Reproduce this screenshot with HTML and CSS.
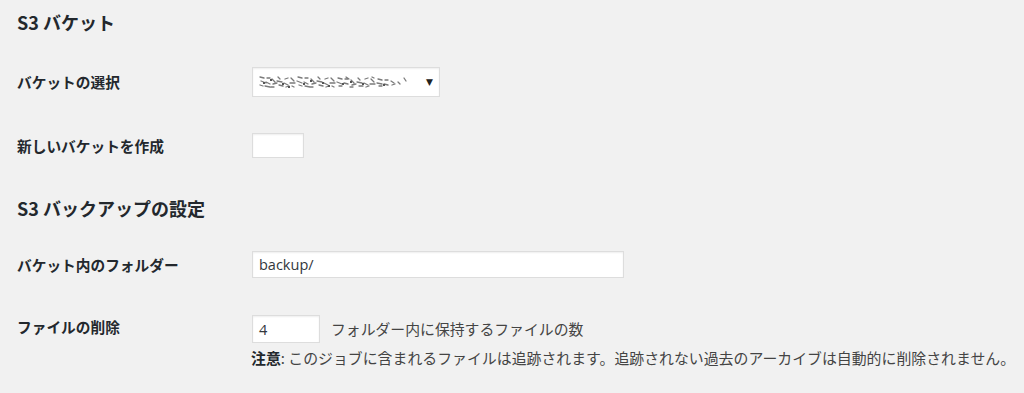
FILE: index.html
```html
<!DOCTYPE html>
<html lang="ja">
<head>
<meta charset="utf-8">
<title>S3 設定</title>
<link rel="stylesheet" href="styles.css">
</head>
<body>
<div class="wrap">
  <h3 class="section first">S3 バケット</h3>
  <div class="row r1">
    <div class="label">バケットの選択</div>
    <div class="field">
      <div class="select">
        <svg class="mosaic" width="160" height="16" viewBox="0 0 160 16" aria-hidden="true">
          <g stroke="#7a7a7a" stroke-width="1.3" fill="none" stroke-linecap="round">
            <path d="M2 3l4 1M3 7l5 2M2 11l3 1M9 4l3 0M8 8l4 2M7 12l5 1M14 5l3 3M15 10l4 -1M13 13l3 0"/>
            <path d="M20 3l2 2M19 7l5 1M21 11l4 1M27 5l3 -1M26 9l4 2M28 13l3 -1M33 4l3 3M32 9l5 0M34 12l2 1"/>
            <path d="M40 3l4 1M39 7l5 2M41 11l3 1M47 4l3 0M46 8l4 2M47 12l5 1M53 5l3 3M54 10l4 -1M52 13l3 0"/>
            <path d="M60 3l2 2M59 7l5 1M61 11l4 1M67 5l3 -1M66 9l4 2M68 13l3 -1M73 4l3 3M72 9l5 0M74 12l2 1"/>
            <path d="M80 4l4 1M79 8l5 2M81 12l3 0M87 5l3 0M86 9l4 1M88 3l3 2M93 6l3 3M94 11l4 -1M92 13l3 0"/>
            <path d="M100 4l2 2M99 8l5 1M101 12l4 0M107 5l3 -1M106 9l4 2M108 13l3 -1M113 5l3 3M112 10l5 0M114 3l2 1"/>
            <path d="M120 5l4 1M119 9l5 1M121 12l3 0M127 6l3 0M126 10l4 1M133 7l3 2M134 11l3 -1M140 8l2 2M146 4l2 3"/>
          </g>
          <g fill="#555">
            <rect x="5" y="8" width="2" height="2"/><rect x="24" y="9" width="2" height="2"/><rect x="45" y="9" width="2" height="2"/>
            <rect x="64" y="8" width="2" height="2"/><rect x="84" y="9" width="2" height="2"/><rect x="104" y="9" width="2" height="2"/>
            <rect x="125" y="10" width="2" height="2"/><rect x="30" y="12" width="2" height="2"/><rect x="70" y="11" width="2" height="2"/>
            <rect x="12" y="5" width="2" height="2"/><rect x="52" y="6" width="2" height="2"/><rect x="92" y="7" width="2" height="2"/>
          </g>
        </svg>
        <span class="arrow">▼</span>
      </div>
    </div>
  </div>
  <div class="row r2">
    <div class="label">新しいバケットを作成</div>
    <div class="field"><div class="input small"></div></div>
  </div>

  <h3 class="section second">S3 バックアップの設定</h3>
  <div class="row r3">
    <div class="label">バケット内のフォルダー</div>
    <div class="field"><div class="input wide">backup/</div></div>
  </div>
  <div class="row r4">
    <div class="label">ファイルの削除</div>
    <div class="field col">
      <div class="inline">
        <div class="input num">4</div>
        <span class="desc">フォルダー内に保持するファイルの数</span>
      </div>
      <p class="note"><strong>注意</strong>: このジョブに含まれるファイルは追跡されます。追跡されない過去のアーカイブは自動的に削除されません。</p>
    </div>
  </div>
</div>
</body>
</html>
```
FILE: styles.css
```css
html, body {
  margin: 0;
  padding: 0;
  background: #f1f1f1;
}
body {
  font-family: "Noto Sans CJK JP", "Open Sans", sans-serif;
  color: #23282d;
  font-size: 14.7px;
}
.wrap {
  padding: 0 17px;
}
.section {
  margin: 0;
  font-size: 18px;
  font-weight: 700;
  line-height: 24px;
  color: #23282d;
}
.section.first {
  padding-top: 10px;
}
.section.second {
  margin-top: 38px;
}
.row {
  display: flex;
  align-items: center;
}
.label {
  width: 235px;
  flex: none;
  font-weight: 700;
  line-height: 20px;
}
.field {
  display: flex;
  align-items: center;
}
.field.col {
  flex-direction: column;
  align-items: flex-start;
}
.r1 { margin-top: 33px; }
.r2 { margin-top: 36px; }
.r3 { margin-top: 31px; }
.r4 { margin-top: 37px; align-items: flex-start; }
.r4 .label { padding-top: 2px; }

.select {
  box-sizing: border-box;
  width: 188px;
  height: 30px;
  background: #fff;
  border: 1px solid #ddd;
  box-shadow: inset 0 1px 2px rgba(0,0,0,0.07);
  display: flex;
  align-items: center;
  padding-left: 5px;
  position: relative;
}
.mosaic {
  display: block;
}
.arrow {
  position: absolute;
  right: 6px;
  top: 7px;
  font-size: 9px;
  line-height: 14px;
  color: #222;
  font-family: "DejaVu Sans", sans-serif;
}
.input {
  box-sizing: border-box;
  background: #fff;
  border: 1px solid #ddd;
  box-shadow: inset 0 1px 2px rgba(0,0,0,0.07);
  font-family: "Open Sans", "Noto Sans CJK JP", sans-serif;
  font-size: 14.5px;
  color: #32373c;
  padding-left: 6px;
  display: flex;
  align-items: center;
}
.input.small {
  width: 52px;
  height: 25px;
}
.input.wide {
  width: 372px;
  height: 27px;
}
.input.num {
  width: 68px;
  height: 28px;
}
.inline {
  display: flex;
  align-items: center;
}
.desc {
  margin-left: 11px;
  line-height: 20px;
  font-size: 14.85px;
  color: #444;
}
.note {
  margin: 5px 0 0 -1px;
  line-height: 20px;
  font-size: 14.9px;
  color: #444;
  white-space: nowrap;
}
.note strong {
  font-weight: 700;
  color: #23282d;
}
```
